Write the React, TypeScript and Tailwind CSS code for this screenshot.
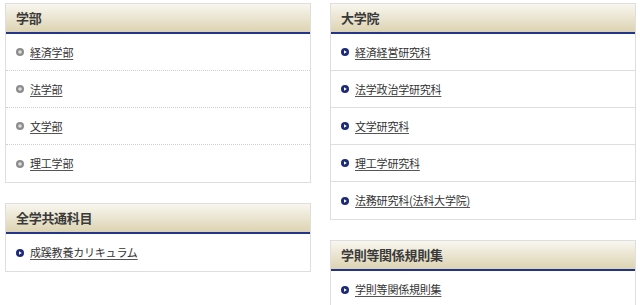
import React from 'react';

type Section = {
  title: string;
  items: string[];
  icon: 'gray' | 'navy';
  dotted?: boolean;
};

const left: Section[] = [
  { title: '学部', items: ['経済学部', '法学部', '文学部', '理工学部'], icon: 'gray', dotted: true },
  { title: '全学共通科目', items: ['成蹊教養カリキュラム'], icon: 'navy' },
];

const right: Section[] = [
  {
    title: '大学院',
    items: ['経済経営研究科', '法学政治学研究科', '文学研究科', '理工学研究科', '法務研究科(法科大学院)'],
    icon: 'navy',
  },
  { title: '学則等関係規則集', items: ['学則等関係規則集'], icon: 'navy' },
];

const Bullet = ({ kind }: { kind: 'gray' | 'navy' }) =>
  kind === 'gray' ? (
    <svg width="8" height="8" viewBox="0 0 8 8" className="shrink-0">
      <circle cx="4" cy="4" r="4" fill="#8c8c8c" />
      <circle cx="4" cy="4" r="1.8" fill="#dcdcdc" />
    </svg>
  ) : (
    <svg width="8" height="8" viewBox="0 0 8 8" className="shrink-0">
      <circle cx="4" cy="4" r="4" fill="#1c2a78" />
      <path d="M3 2.2 L5.8 4 L3 5.8 Z" fill="#ffffff" />
    </svg>
  );

const Box = ({ section }: { section: Section }) => (
  <div className="border border-[#dedede] bg-white">
    <div className="h-[30px] flex items-center pl-[10px] bg-gradient-to-b from-[#f8f6ef] to-[#ddd3b2] border-b-2 border-[#22358c]">
      <h2 className="text-[13px] font-bold text-[#3a3a3a] tracking-[-0.3px]">{section.title}</h2>
    </div>
    <ul>
      {section.items.map((item, i) => (
        <li
          key={item}
          className={`h-[37px] flex items-center gap-[6px] pl-[10px] ${
            i < section.items.length - 1
              ? section.dotted
                ? 'border-b border-dotted border-[#cfcfcf]'
                : 'border-b border-[#dedede]'
              : ''
          }`}
        >
          <Bullet kind={section.icon} />
          <a href="#" className="text-[11px] text-[#333] underline underline-offset-2 decoration-[#555] tracking-[-0.2px]">
            {item}
          </a>
        </li>
      ))}
    </ul>
  </div>
);

export default function App() {
  return (
    <div
      className="w-[640px] h-[305px] overflow-hidden bg-white flex gap-[19px] pl-[5px] pt-[3px]"
      style={{ fontFamily: '"Noto Sans CJK JP", "Noto Sans", sans-serif' }}
    >
      <div className="w-[306px] flex flex-col gap-[20px]">
        {left.map((s) => (
          <Box key={s.title} section={s} />
        ))}
      </div>
      <div className="w-[306px] flex flex-col gap-[20px]">
        {right.map((s) => (
          <Box key={s.title} section={s} />
        ))}
      </div>
    </div>
  );
}
